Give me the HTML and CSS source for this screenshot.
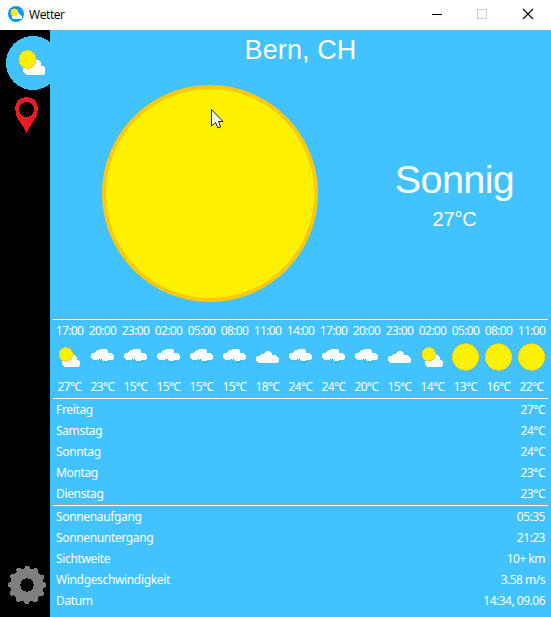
FILE: index.html
```
<!DOCTYPE html>
<html lang="de">
<head>
<meta charset="utf-8">
<title>Wetter</title>
<link rel="stylesheet" href="styles.css">
</head>
<body>
<svg class="defs" aria-hidden="true">
  <defs>
    <symbol id="partly" viewBox="0 0 33 28">
      <path fill="#fff" d="M9 18V21L11 24H25L27 22V18L25 16.500H23.500V14L21 11L18 12L12 17Z"/>
      <circle cx="12.800" cy="11.400" r="6.800" fill="#fff200" stroke="#ffc90e" stroke-width=".9"/>
    </symbol>
    <symbol id="rain" viewBox="0 0 33 28">
      <path fill="#fff" d="M5 14V12L6 10H9L11 7H13L14 6H20L22 8V10H25L28 12V15L26 17H22L21 18H18L16 17H7L5 15Z"/>
      <path fill="#00a2e8" d="M9 18h1v1h-1zM13 16h1v1h-1zM15 16h1v1h-1zM14 19h1v1h-1zM18 19h1v1h-1zM20 19h1v1h-1zM22 18h1v1h-1z"/>
    </symbol>
    <symbol id="cloud" viewBox="0 0 33 28">
      <path fill="#fff" d="M5 16L6 13H9V12L11 11H13L14 9L16 8H18L21 10V12H24L26 14L28 15V19L26 20H7L5 18Z"/>
    </symbol>
    <symbol id="sun" viewBox="0 0 33 28">
      <circle cx="16.500" cy="14" r="13.300" fill="#fff200" stroke="#ffc90e" stroke-width=".7"/>
    </symbol>
  </defs>
</svg>
<header class="titlebar">
  <svg class="app-icon" viewBox="0 0 16 16"><circle cx="8" cy="8" r="8" fill="#0a96ff"/><path fill="#fff" d="M4 10V12L5 13H13L14 12V10L12 9L11 7H9Z"/><circle cx="6.500" cy="6.500" r="3.700" fill="#fff200" stroke="#e8d540" stroke-width=".4"/></svg>
  <span class="app-name">Wetter</span>
  <svg class="controls" width="106" height="12" viewBox="0 0 106 12" shape-rendering="crispEdges"><path d="M1 6.500h10" stroke="#000"/><path d="M46.500 1.500h9v9h-9z" fill="none" stroke="#ccc"/><path d="M92 1l10 10M102 1L92 11" stroke="#000" stroke-width="1.100" shape-rendering="auto"/></svg>
</header>
<div class="window">
  <nav class="sidebar">
    <svg class="nav-top" width="50" height="110" viewBox="0 0 50 110" shape-rendering="crispEdges">
      <circle cx="33" cy="33" r="27" fill="#42c2ff"/>
      <path fill="#fff" d="M23 38V42L26 45H43L45 43V38L43 36H41V33L38 30H35L30 36Z"/>
      <ellipse cx="27.500" cy="29.500" rx="8.600" ry="9" fill="#fff200" stroke="#ffc90e"/>
      <path fill="#ed1c24" fill-rule="evenodd" d="M26.500 103C25 97 15 89 15 79C15 71.500 20 67 26.500 67S38 71.500 38 79C38 89 28 97 26.500 103ZM26.500 72A7.500 7.500 0 1 0 26.500 87A7.500 7.500 0 1 0 26.500 72Z"/>
    </svg>
    <svg class="nav-bottom" width="50" height="50" viewBox="-27 -25 50 50" shape-rendering="crispEdges">
      <circle r="11.750" fill="none" stroke="#7f7f7f" stroke-width="10"/>
      <circle r="16.500" fill="none" stroke="#7f7f7f" stroke-width="5.400" stroke-linecap="round" stroke-dasharray=".01 8.629"/>
    </svg>
  </nav>
  <main class="content">
    <h1 class="city">Bern, CH</h1>
    <section class="current">
      <div class="sun-wrap"><div class="big-sun">
        <svg class="cursor" width="13" height="21" viewBox="0 0 13 21"><path d="M.5 .5V17L4.500 13.500L7 19L9.500 18L7.500 12.500H12Z" fill="#fff" stroke="#222" stroke-width="1"/></svg>
      </div></div>
      <div class="summary"><div class="state">Sonnig</div><div class="degrees">27°C</div></div>
    </section>
    <section class="hours">
      <div class="hour"><span>17:00</span><svg><use href="#partly"/></svg><span>27°C</span></div>
      <div class="hour"><span>20:00</span><svg><use href="#rain"/></svg><span>23°C</span></div>
      <div class="hour"><span>23:00</span><svg><use href="#rain"/></svg><span>15°C</span></div>
      <div class="hour"><span>02:00</span><svg><use href="#rain"/></svg><span>15°C</span></div>
      <div class="hour"><span>05:00</span><svg><use href="#rain"/></svg><span>15°C</span></div>
      <div class="hour"><span>08:00</span><svg><use href="#rain"/></svg><span>15°C</span></div>
      <div class="hour"><span>11:00</span><svg><use href="#cloud"/></svg><span>18°C</span></div>
      <div class="hour"><span>14:00</span><svg><use href="#rain"/></svg><span>24°C</span></div>
      <div class="hour"><span>17:00</span><svg><use href="#rain"/></svg><span>24°C</span></div>
      <div class="hour"><span>20:00</span><svg><use href="#rain"/></svg><span>20°C</span></div>
      <div class="hour"><span>23:00</span><svg><use href="#cloud"/></svg><span>15°C</span></div>
      <div class="hour"><span>02:00</span><svg><use href="#partly"/></svg><span>14°C</span></div>
      <div class="hour"><span>05:00</span><svg><use href="#sun"/></svg><span>13°C</span></div>
      <div class="hour"><span>08:00</span><svg><use href="#sun"/></svg><span>16°C</span></div>
      <div class="hour"><span>11:00</span><svg><use href="#sun"/></svg><span>22°C</span></div>
    </section>
    <section class="rows">
      <div class="row"><span>Freitag</span><span class="value">27°C</span></div>
      <div class="row"><span>Samstag</span><span class="value">24°C</span></div>
      <div class="row"><span>Sonntag</span><span class="value">24°C</span></div>
      <div class="row"><span>Montag</span><span class="value">23°C</span></div>
      <div class="row"><span>Dienstag</span><span class="value">23°C</span></div>
    </section>
    <section class="rows">
      <div class="row"><span>Sonnenaufgang</span><span class="value">05:35</span></div>
      <div class="row"><span>Sonnenuntergang</span><span class="value">21:23</span></div>
      <div class="row"><span>Sichtweite</span><span class="value">10+ km</span></div>
      <div class="row"><span>Windgeschwindigkeit</span><span class="value">3.58 m/s</span></div>
      <div class="row"><span>Datum</span><span class="value">14:34, 09.06</span></div>
    </section>
  </main>
</div>
</body>
</html>
```
FILE: styles.css
```
* { box-sizing: border-box; }
body {
  margin: 0;
  width: 551px;
  height: 617px;
  overflow: hidden;
  display: flex;
  flex-direction: column;
  font: 12px/21px "Noto Sans", "Open Sans", sans-serif;
  color: #fff;
}
.defs { position: absolute; width: 0; height: 0; }
.titlebar {
  display: flex;
  align-items: center;
  height: 30px;
  padding: 0 14px 2px 8px;
  background: #fff;
  color: #000;
}
.app-icon { width: 16px; height: 16px; }
.app-name { margin-left: 5px; font-size: 12px; font-family: "Open Sans", sans-serif; letter-spacing: -0.4px; padding-top: 1px; }
.controls { margin-left: auto; }
.window { display: flex; height: 587px; }
.sidebar {
  width: 50px;
  background: #000;
  display: flex;
  flex-direction: column;
  justify-content: space-between;
  padding-bottom: 7px;
}
.content {
  width: 501px;
  padding: 0 3px;
  background: #42c2ff;
}
.city {
  margin: 0;
  height: 40px;
  text-align: center;
  font: 27px/40px "Liberation Sans", Arial, sans-serif;
  letter-spacing: 0.1px;
}
.current {
  display: flex;
  height: 248px;
  font-family: "Liberation Sans", Arial, sans-serif;
}
.sun-wrap { width: 314px; padding-top: 15px; }
.big-sun {
  position: relative;
  width: 216px;
  height: 217px;
  margin: 0 auto;
  border: 4px solid #ffc90e;
  border-radius: 50%;
  background: #fff200;
}
.cursor { position: absolute; left: 105px; top: 20px; }
.summary { flex: 1; padding-top: 85px; text-align: center; padding-right: 6px; }
.state { font-size: 39.5px; line-height: 48px; letter-spacing: -0.6px; }
.degrees { font-size: 20px; line-height: 24px; margin-top: 4px; letter-spacing: -0.2px; }
.hours {
  display: grid;
  grid-template-columns: repeat(15, 33px);
  height: 79px;
  border-top: 1px solid #a0a0a0;
  box-shadow: inset 0 1px #fff;
  padding-top: 1px;
}
.hour {
  display: flex;
  flex-direction: column;
  align-items: center;
  letter-spacing: -0.65px;
}
.hour svg { width: 33px; height: 28px; margin: 2px 0 5px; flex: none; shape-rendering: crispEdges; }
.rows {
  height: 107px;
  border-top: 1px solid #a0a0a0;
  box-shadow: inset 0 1px #fff;
  padding: 1px 3px 0;
}
.row { display: flex; justify-content: space-between; letter-spacing: -0.35px; }
.value { letter-spacing: -0.5px; }
```
